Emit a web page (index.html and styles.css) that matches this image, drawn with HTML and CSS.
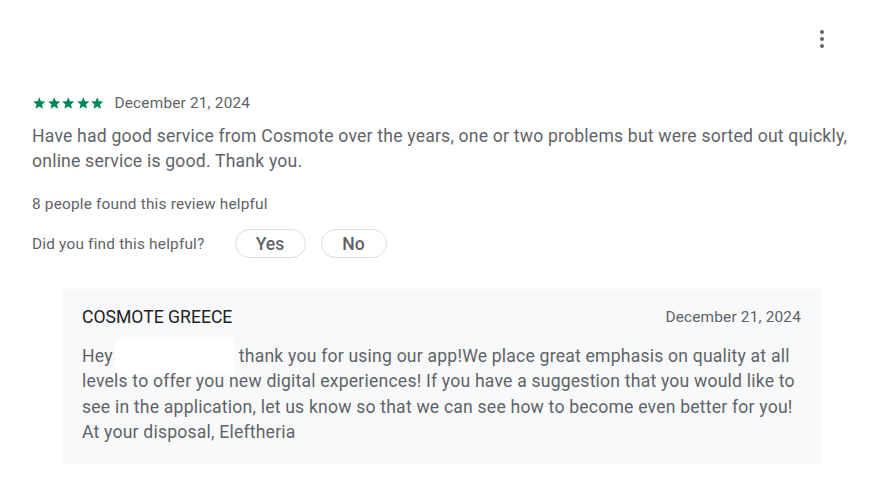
FILE: index.html
```html
<!DOCTYPE html>
<html>
<head>
<meta charset="utf-8">
<link rel="stylesheet" href="styles.css">
</head>
<body>
<div class="review">
  <div class="top">
    <button class="kebab" aria-label="More">
      <svg width="24" height="24" viewBox="0 0 24 24"><circle cx="12" cy="5" r="2" fill="#5f6368"/><circle cx="12" cy="12" r="2" fill="#5f6368"/><circle cx="12" cy="19" r="2" fill="#5f6368"/></svg>
    </button>
  </div>
  <div class="meta">
    <div class="stars">
      <svg viewBox="0 0 24 24" class="star"><path d="M12 17.27L18.18 21l-1.64-7.03L22 9.24l-7.19-.61L12 2 9.19 8.63 2 9.24l5.46 4.73L5.82 21z"/></svg>
      <svg viewBox="0 0 24 24" class="star"><path d="M12 17.27L18.18 21l-1.64-7.03L22 9.24l-7.19-.61L12 2 9.19 8.63 2 9.24l5.46 4.73L5.82 21z"/></svg>
      <svg viewBox="0 0 24 24" class="star"><path d="M12 17.27L18.18 21l-1.64-7.03L22 9.24l-7.19-.61L12 2 9.19 8.63 2 9.24l5.46 4.73L5.82 21z"/></svg>
      <svg viewBox="0 0 24 24" class="star"><path d="M12 17.27L18.18 21l-1.64-7.03L22 9.24l-7.19-.61L12 2 9.19 8.63 2 9.24l5.46 4.73L5.82 21z"/></svg>
      <svg viewBox="0 0 24 24" class="star"><path d="M12 17.27L18.18 21l-1.64-7.03L22 9.24l-7.19-.61L12 2 9.19 8.63 2 9.24l5.46 4.73L5.82 21z"/></svg>
    </div>
    <span class="date">December 21, 2024</span>
  </div>
  <p class="text">Have had good service from Cosmote over the years, one or two problems but were sorted out quickly, online service is good. Thank you.</p>
  <div class="helpful-count">8 people found this review helpful</div>
  <div class="helpful-ask">
    <span>Did you find this helpful?</span>
    <button class="pill yes">Yes</button>
    <button class="pill no">No</button>
  </div>
  <div class="reply">
    <div class="reply-head">
      <span class="dev">COSMOTE GREECE</span>
      <span class="rdate">December 21, 2024</span>
    </div>
    <p class="reply-text">Hey <span class="redact"></span> thank you for using our app!We place great emphasis on quality at all levels to offer you new digital experiences! If you have a suggestion that you would like to see in the application, let us know so that we can see how to become even better for you! At your disposal, Eleftheria</p>
  </div>
</div>
</body>
</html>
```
FILE: styles.css
```css
* { box-sizing: border-box; }
body {
  margin: 0;
  background: #fff;
  font-family: Roboto, "Liberation Sans", Arial, sans-serif;
  color: #5f6368;
}
.review {
  padding: 15px 30px 0 32px;
  width: 885px;
}
.top {
  display: flex;
  justify-content: flex-end;
  height: 48px;
}
.kebab {
  width: 48px;
  height: 48px;
  border: 0;
  background: none;
  padding: 0;
  margin-right: 9px;
  display: flex;
  align-items: center;
  justify-content: center;
}
.meta {
  display: flex;
  align-items: center;
  margin-top: 30px;
  height: 20px;
}
.stars {
  display: flex;
}
.star {
  width: 14.5px;
  height: 14.5px;
  fill: #01875f;
}
.date {
  font-size: 15.4px;
  line-height: 20px;
  margin-left: 10px;
  letter-spacing: 0.18px;
}
.text {
  margin: 11px 0 0 0;
  font-size: 17.6px;
  line-height: 25px;
  color: #5f6368;
  letter-spacing: 0.2px;
}
.helpful-count {
  margin-top: 20px;
  font-size: 15.4px;
  line-height: 20px;
  letter-spacing: 0.18px;
}
.helpful-ask {
  display: flex;
  align-items: center;
  margin-top: 15px;
  font-size: 15.4px;
  letter-spacing: 0.19px;
}
.pill {
  height: 29px;
  border: 1px solid #dadce0;
  border-radius: 15px;
  background: #fff;
  font-family: Roboto, "Liberation Sans", Arial, sans-serif;
  font-size: 17.6px;
  font-weight: 500;
  color: #5f6368;
  padding: 0;
}
.yes { width: 71px; margin-left: 30px; }
.no { width: 66px; margin-left: 15px; }
.reply {
  margin: 31px 0 0 30px;
  width: 760px;
  background: #f8f9fa;
  padding: 16px 21px 19px 20px;
}
.reply-head {
  display: flex;
  justify-content: space-between;
  align-items: center;
  height: 24px;
}
.dev {
  font-size: 17.6px;
  color: #202124;
}
.rdate {
  font-size: 15.4px;
  letter-spacing: 0.18px;
}
.reply-text {
  margin: 15px 0 0 0;
  font-size: 17.6px;
  line-height: 25.3px;
  color: #5f6368;
  letter-spacing: 0.2px;
}
.redact {
  display: inline-block;
  width: 119px;
  height: 36px;
  background: #fff;
  vertical-align: middle;
  margin: -6px 0 -6px -2px;
}
```
